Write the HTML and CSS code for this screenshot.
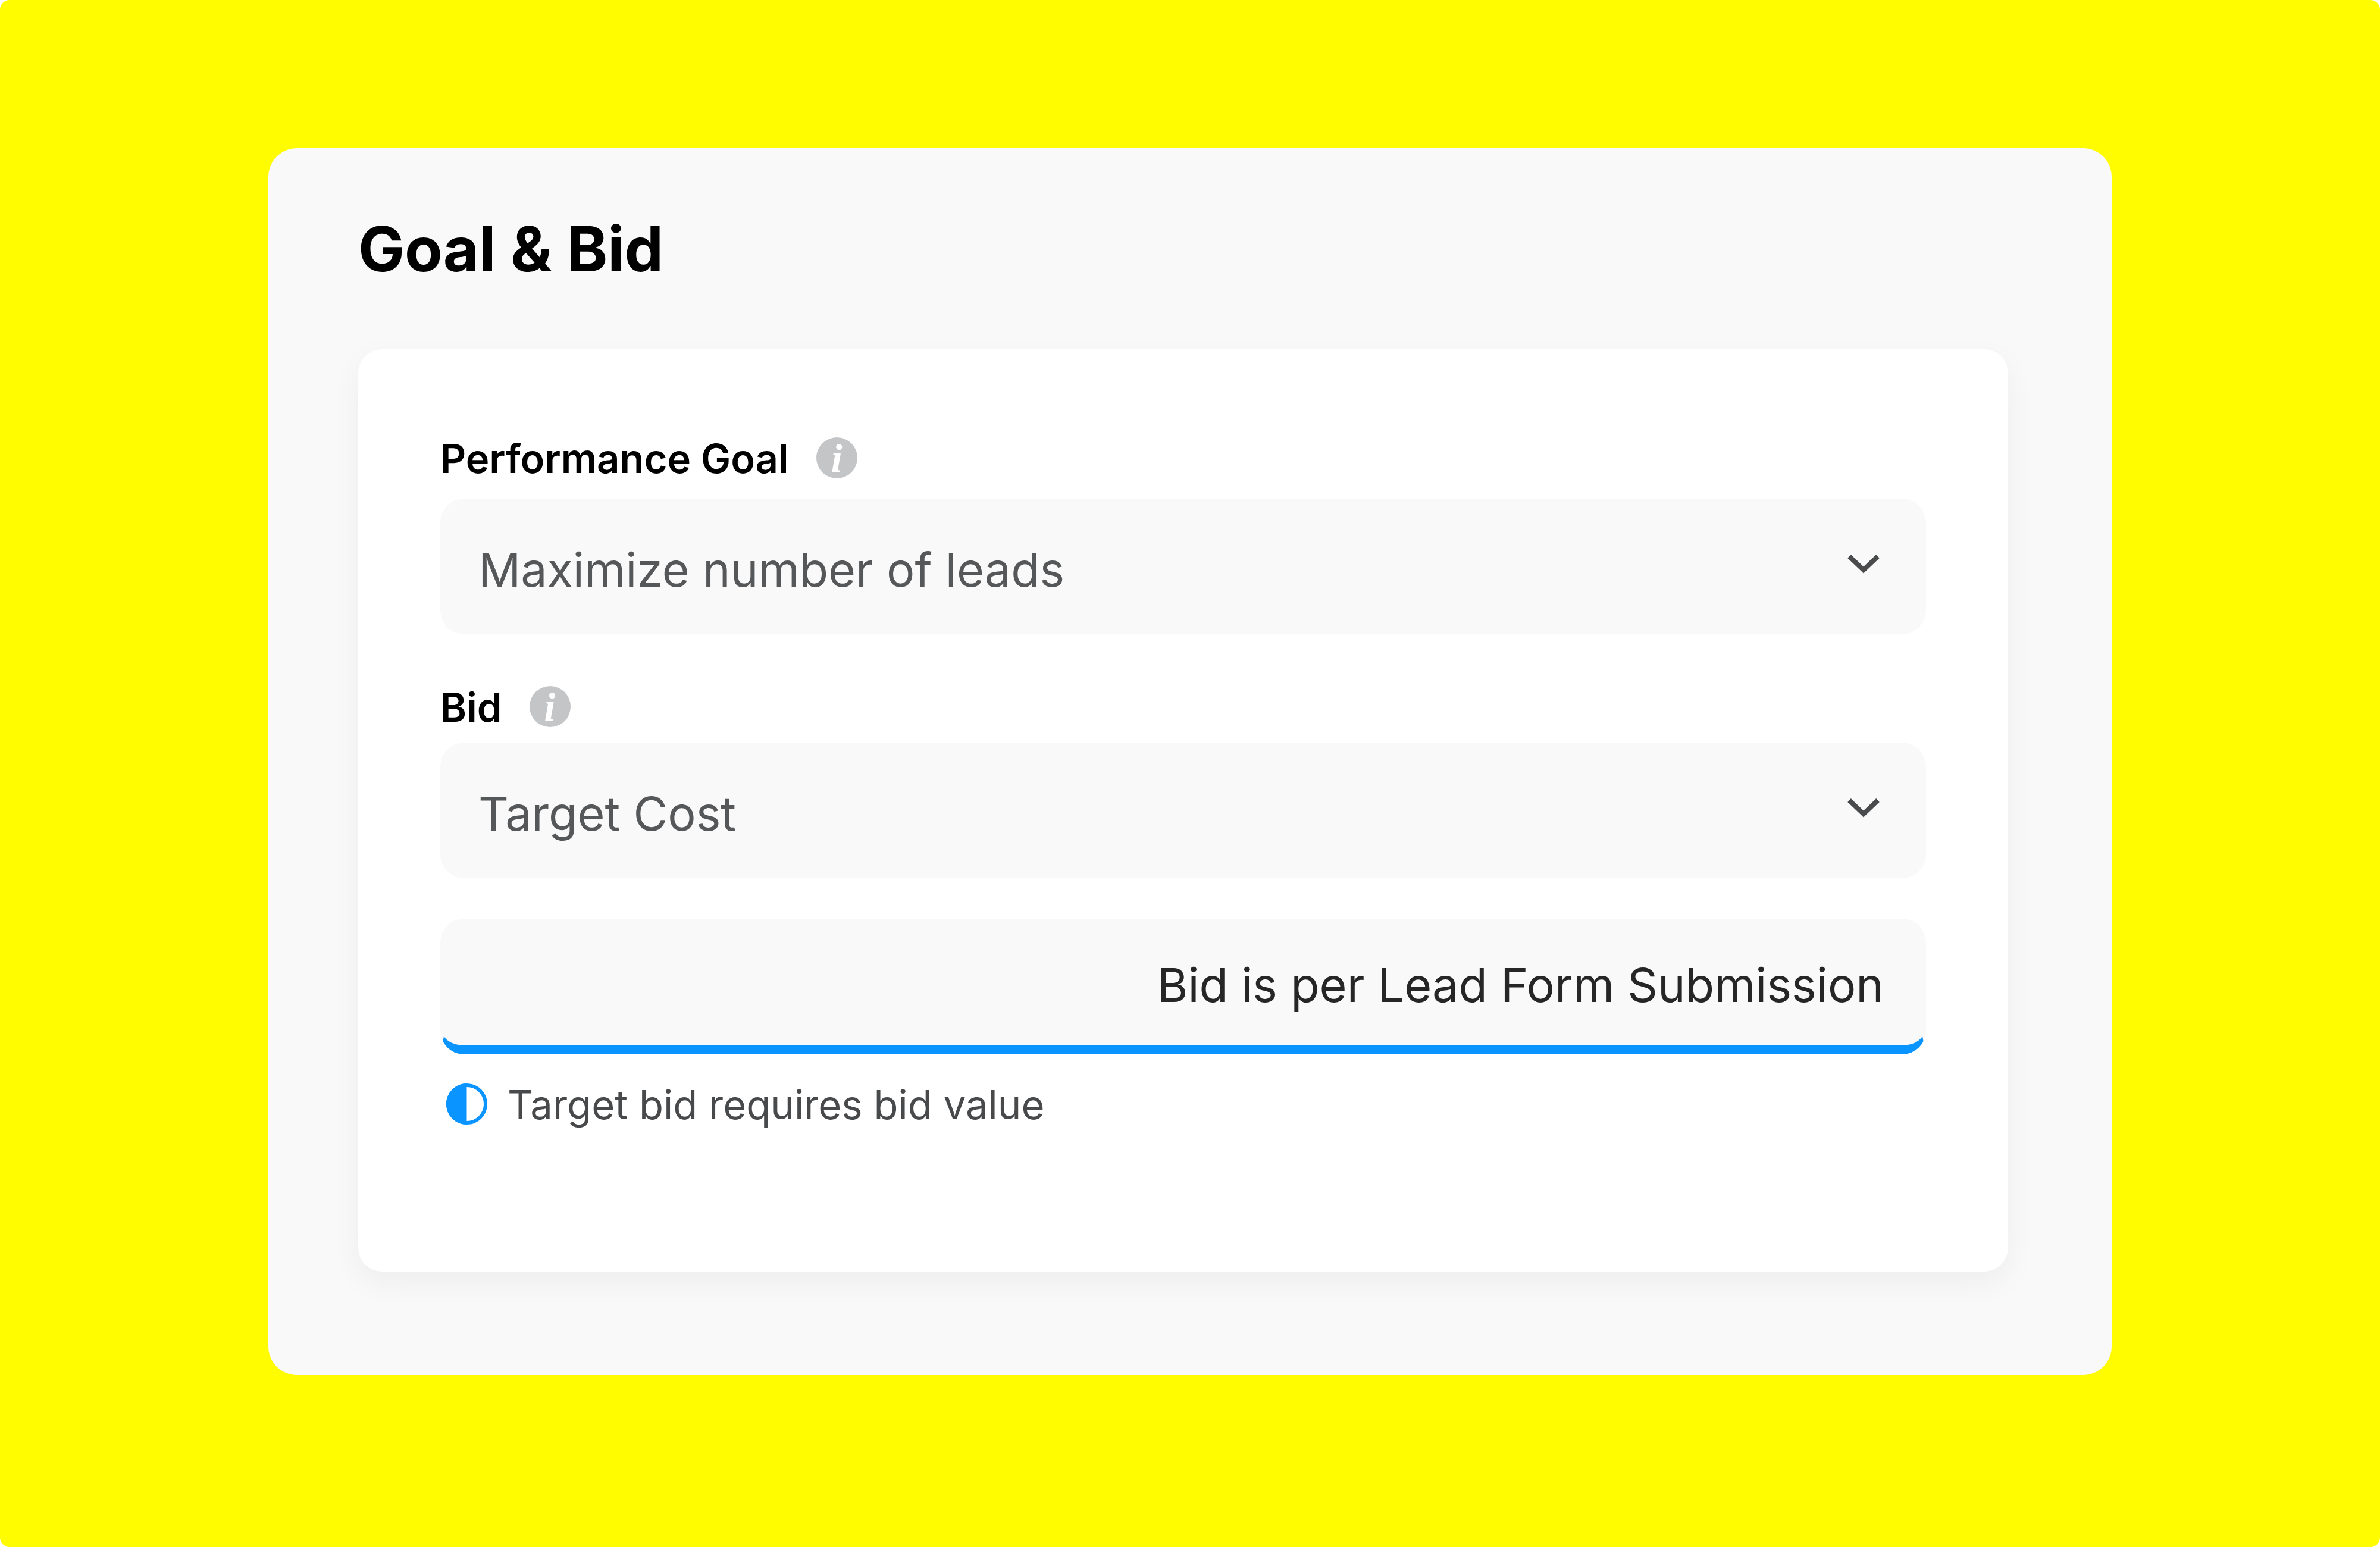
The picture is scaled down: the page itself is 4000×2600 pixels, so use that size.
FILE: index.html
```html
<!DOCTYPE html>
<html lang="en">
<head>
    <meta charset="UTF-8">
    <meta name="viewport" content="width=device-width, initial-scale=1.0">
    <title>Goal &amp; Bid</title>
    <link rel="stylesheet" href="styles.css">
</head>
<body>
    <div class="page">
        <section class="panel">
            <h1>Goal &amp; Bid</h1>
            <form class="card">
                <div class="labelRow goalRow">
                    <label for="goal">Performance Goal</label>
                    <button type="button" class="info">i</button>
                </div>
                <div class="selectBox">
                    <select id="goal">
                        <option>Maximize number of leads</option>
                    </select>
                    <svg class="chevron" viewBox="0 0 54 34"><path d="M3 4 L27 27 L51 4"/></svg>
                </div>
                <div class="labelRow">
                    <label for="bid">Bid</label>
                    <button type="button" class="info">i</button>
                </div>
                <div class="selectBox bidBox">
                    <select id="bid">
                        <option>Target Cost</option>
                    </select>
                    <svg class="chevron" viewBox="0 0 54 34"><path d="M3 4 L27 27 L51 4"/></svg>
                </div>
                <input type="text" id="bidValue" placeholder="Bid is per Lead Form Submission">
                <label class="hint" for="bidValue">
                    <svg class="half" viewBox="0 0 69 69">
                        <circle cx="34.5" cy="34.5" r="31.5"/>
                        <path d="M34.5 0 A34.5 34.5 0 0 0 34.5 69 Z"/>
                    </svg>
                    Target bid requires bid value
                </label>
            </form>
        </section>
    </div>
</body>
</html>
```

FILE: styles.css
```css
* {
    box-sizing: border-box;
}

body {
    margin: 0;
    background-color: white;
    font-family: Inter, "Liberation Sans", sans-serif;
}

.page {
    min-height: 100vh;
    padding: 249px 451px 289px;
    background-color: #fffc00;
    border-radius: 16px;
}

.panel {
    padding: 109px 174px 174px 151px;
    background-color: #f9f9f9;
    border-radius: 48px;
}

h1 {
    margin: 0 0 109px;
    font-size: 104px;
    line-height: 120px;
    font-weight: 700;
    color: black;
}

.card {
    display: flex;
    flex-direction: column;
    padding: 148px 138px 244px;
    background-color: white;
    border-radius: 40px;
    box-shadow: 0 18px 52px rgba(0, 0, 0, 0.05);
}

.labelRow {
    display: flex;
    align-items: flex-start;
    gap: 46px;
    margin-bottom: 23px;
    font-size: 67px;
    line-height: 72px;
    font-weight: 600;
    color: black;
}
.goalRow {
    margin-bottom: 31px;
}

.info {
    width: 69px;
    height: 69px;
    padding: 0;
    border: none;
    border-radius: 50%;
    background-color: #c4c5c7;
    color: white;
    font: italic bold 68px/64px "Liberation Serif", serif;
    cursor: pointer;
}

.selectBox {
    position: relative;
    margin-bottom: 87px;
}
.bidBox {
    margin-bottom: 68px;
}
select, input {
    display: block;
    width: 100%;
    height: 228px;
    border: none;
    border-radius: 40px;
    outline: none;
    background-color: #f9f9f9;
    font-family: inherit;
    font-size: 79px;
    line-height: 100px;
}
select {
    appearance: none;
    padding: 69px 160px 59px 64px;
    color: #555759;
    cursor: pointer;
}
input {
    padding: 61px 68px 52px;
    border: 3px solid transparent;
    border-top: none;
    border-bottom: 15px solid #0a94ff;
    text-align: right;
    color: #262626;
}
input::placeholder {
    color: #262626;
}

.chevron {
    position: absolute;
    top: 93px;
    right: 78px;
    width: 54px;
    height: 34px;
    fill: none;
    stroke: #4a4b4d;
    stroke-width: 8;
    pointer-events: none;
}

.hint {
    display: flex;
    align-items: flex-start;
    gap: 34px;
    margin: 49px 0 0 10px;
    font-size: 67px;
    line-height: 72px;
    color: #48494b;
}
.half {
    width: 69px;
    height: 69px;
    fill: #0a94ff;
}
.half circle {
    fill: white;
    stroke: #0a94ff;
    stroke-width: 6;
}
```
